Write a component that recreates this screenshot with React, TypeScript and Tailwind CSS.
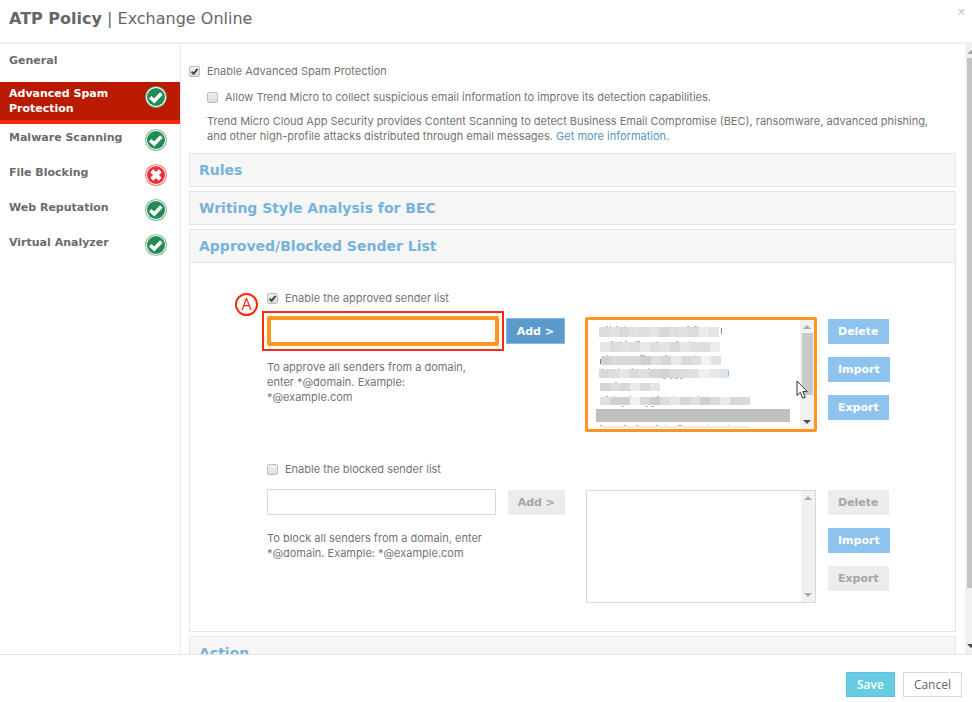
import { ReactNode } from "react";

type status = "ok" | "error";

type navItem = {
  label: string;
  status?: status;
  active?: boolean;
};

const navItems: navItem[] = [
  { label: "Advanced Spam Protection", status: "ok", active: true },
  { label: "Malware Scanning", status: "ok" },
  { label: "File Blocking", status: "error" },
  { label: "Web Reputation", status: "ok" },
  { label: "Virtual Analyzer", status: "ok" },
];

// hidden addresses: y, height, start x and one shade per cell
const maskedRows = [
  { y: 7, h: 10, x: 11, cells: ["#dcdcdc", "#e2e2e2", "#dadada", "#e0e0e0", "#dedede", "#e4e4e4", "#d6d9d7", "#dedede", "#e0e0e0", "#dcdcdc", "#ececec", "#e2e4e5"] },
  { y: 22, h: 10, x: 12, cells: ["#e6e6e6", "#dcdcdc", "#e2e2e2", "#dedede", "#e8e8e8", "#dedede", "#e4e4e4", "#dadada", "#e6e6e6", "#e0e0e0", "#dedede", "#ececec"] },
  { y: 36, h: 9, x: 13, cells: ["#d2d2d2", "#dadada", "#d8d8d8", "#d6d6d6", "#cfcfcf", "#e0e0e0", "#d6d6d6", "#e8e8e8", "#d9d9d9", "#dedede", "#f2f2f2", "#e2e2e2"] },
  { y: 49, h: 9, x: 11, cells: ["#d8d8d8", "#dedede", "#e6e6e6", "#dadada", "#e0e0e0", "#d4d6d5", "#d2d2d2", "#d9d9d9", "#dedede", "#e0e0e0", "#f0f0f0", "#e8e8e8", "#dfe6ea"] },
  { y: 63, h: 8, x: 12, cells: ["#d6d6d6", "#dedede", "#d8d8d8", "#ebebeb", "#d9d9d9", "#e4e4e4"] },
  { y: 77, h: 8, x: 12, cells: ["#e0e0e0", "#d2d2d2", "#d0d0d0", "#f0f0f0", "#d8d8d8", "#cdcdcd", "#dedede", "#e6e6e6", "#d6d6d6", "#e0e0e0", "#cfcfcf", "#dadada", "#eaeaea", "#d6d6d6", "#d9d9d9"] },
];

// letter tips left visible round the mask
const specks = [
  [18, 6, 2], [22, 6, 1], [28, 6, 2], [36, 6, 1], [99, 6, 2], [106, 6, 3],
  [23, 21, 2], [32, 21, 1], [37, 21, 2], [48, 21, 4], [68, 21, 1], [88, 21, 2], [101, 21, 1],
  [19, 35, 1], [52, 35, 5], [77, 35, 2], [106, 35, 1],
  [14, 48, 1], [30, 48, 1], [44, 48, 1], [60, 48, 1], [75, 58, 3], [87, 58, 3], [92, 58, 3], [82, 58, 2],
  [27, 62, 2],
  [18, 76, 2], [26, 76, 1], [42, 76, 1], [69, 76, 2], [85, 76, 1], [110, 76, 1], [57, 86, 3], [63, 86, 3], [34, 86, 2],
  [12, 105, 2], [36, 105, 2], [48, 105, 2], [68, 105, 2], [77, 105, 1], [90, 105, 4], [120, 105, 1], [140, 105, 1],
];

const StatusIcon = ({ status }: { status: status }) => (
  <svg className="w-[22px] h-[22px] shrink-0" viewBox="0 0 22 22">
    <circle cx="11" cy="11" r="10.8" fill={status === "ok" ? "#6fae8c" : "#ee6a6a"} />
    <circle cx="11" cy="11" r="10" fill="#fff" />
    <circle cx="11" cy="11" r="9" fill={status === "ok" ? "#238a52" : "#ea3338"} />
    {status === "ok" ? (
      <path d="M5.2 11.2 9.2 15 16.4 7.4" stroke="#fff" strokeWidth="3.6" fill="none" />
    ) : (
      <path d="m6.8 6.8 8.4 8.4M15.2 6.8l-8.4 8.4" stroke="#fff" strokeWidth="4.2" fill="none" />
    )}
  </svg>
);

const Checkbox = ({
  id,
  checked,
  children,
}: {
  id: string;
  checked?: boolean;
  children: ReactNode;
}) => (
  <div className="flex items-center leading-[15px]">
    <span className="grid mr-[7px]">
      <input
        id={id}
        type="checkbox"
        defaultChecked={checked}
        className="peer col-start-1 row-start-1 appearance-none w-[11px] h-[11px] rounded-[2px] border border-[#bdbdbd] bg-linear-to-b from-[#f0f0f0] to-[#dcdcdc]"
      />
      <svg
        className="col-start-1 row-start-1 w-[11px] h-[11px] pointer-events-none invisible peer-checked:visible"
        viewBox="0 0 11 11"
      >
        <path d="M2.5 5.6 4.6 7.9 8.6 2.8" stroke="#404040" strokeWidth="1.9" fill="none" />
      </svg>
    </span>
    <label htmlFor={id}>{children}</label>
  </div>
);

const Arrow = ({ down, dark }: { down?: boolean; dark?: boolean }) => (
  <svg className="w-[8px] h-[4px] shrink-0" viewBox="0 0 8 4">
    <path d={down ? "M0 0h8L4 4z" : "M0 4h8L4 0z"} fill={dark ? "#505050" : "#a8a8a8"} />
  </svg>
);

const Button = ({
  children,
  variant,
}: {
  children: ReactNode;
  variant: "light" | "strong" | "disabled";
}) => {
  const colors = {
    light: "h-[25px] bg-[#8dc3ed] text-white",
    strong: "h-[26px] bg-[#5b9bcb] border border-[#86b9ea] text-white",
    disabled: "h-[25px] bg-[#ececec] text-[#a6a6a6]",
  };
  return (
    <button
      type="button"
      disabled={variant === "disabled"}
      className={`px-[10px] font-bold font-['DejaVu_Sans',sans-serif] whitespace-nowrap leading-[15px] ${colors[variant]}`}
    >
      {children}
    </button>
  );
};

const MaskedList = () => (
  <svg className="w-[212px] h-[109px]" viewBox="0 0 212 109" shapeRendering="crispEdges">
    {specks.map(([x, y, w], i) => (
      <rect key={i} x={x} y={y} width={w} height="1" fill="#b4b4b4" />
    ))}
    {maskedRows.map((row) =>
      row.cells.map((fill, i) => (
        <rect key={`${row.y}-${i}`} x={row.x + i * 10} y={row.y} width="10" height={row.h} fill={fill} />
      ))
    )}
    <rect x="133" y="8" width="1" height="6" fill="#5f8fc0" />
    <rect x="140" y="51" width="1" height="5" fill="#8fc0e4" />
    <rect x="12" y="39" width="1" height="5" fill="#8a6f6f" />
    <rect x="12" y="106" width="150" height="2" fill="#ececec" />
    <rect x="8" y="89" width="194" height="13" fill="#c0c0c0" />
  </svg>
);

const SenderBlock = ({
  kind,
  children,
}: {
  kind: "approved" | "blocked";
  children: ReactNode;
}) => {
  const on = kind === "approved";
  return (
    <div className="relative w-fit">
      {on && (
        <span className="absolute top-[2px] left-[-32px] w-[23px] h-[23px] rounded-full border-2 border-[#fb2a0c] text-[#fb2a0c] text-[16px] leading-[19px] text-center font-['Open_Sans',sans-serif]">
          A
        </span>
      )}
      <Checkbox id={kind} checked={on}>
        Enable the {kind} sender list
      </Checkbox>
      <div className="flex mt-[10px]">
        <div className="w-[298px] mr-5">
          <div className="flex items-center justify-between h-[30px]">
            <div className="relative w-[232px] shrink-0">
              <input
                type="text"
                aria-label={`Add ${kind} sender`}
                disabled={!on}
                className={
                  on
                    ? "block w-full h-[30px] px-1 bg-white border-4 border-[#ff961e] rounded-[2px] outline-none"
                    : "block w-[229px] h-[26px] px-1 bg-white border border-[#d9d9d9]"
                }
              />
              {on && <span className="absolute -inset-[5px] border-2 border-[#fb2a0c] pointer-events-none" />}
            </div>
            <Button variant={on ? "strong" : "disabled"}>Add &gt;</Button>
          </div>
          <p className="mt-[14px] w-[220px] leading-[15px]">{children}</p>
        </div>
        <div className="flex items-end justify-center w-[232px] h-[116px] mr-[11px]">
          <div
            role="listbox"
            aria-label={`${kind} senders`}
            className={
              on
                ? "relative flex w-full h-[115px] bg-white border-3 border-[#ff961e] rounded-[2px]"
                : "flex w-[230px] h-[113px] bg-white border border-[#d9d9d9]"
            }
          >
            <div className="flex-1 overflow-hidden">{on && <MaskedList />}</div>
            <div className="flex flex-col items-center w-[14px] bg-[#f1f1f1] py-[5px]">
              <Arrow />
              {on && <div className="w-[11px] h-[62px] mt-1 bg-[#c9c9c9]" />}
              <div className="flex-1" />
              <Arrow down dark={on} />
            </div>
            {on && (
              <svg className="absolute left-[208px] top-[60px] w-[12px] h-[20px]" viewBox="0 0 12 20">
                <path
                  d="M1 1v14.5l3.3-3.1 2.4 5.8 2.5-1-2.4-5.6h4.4z"
                  fill="#fff"
                  stroke="#333"
                  strokeWidth="1"
                />
              </svg>
            )}
          </div>
        </div>
        <div className="flex flex-col items-start gap-[13px] pt-[3px]">
          <Button variant={on ? "light" : "disabled"}>Delete</Button>
          <Button variant="light">Import</Button>
          <Button variant={on ? "light" : "disabled"}>Export</Button>
        </div>
      </div>
    </div>
  );
};

const Section = ({ title, children }: { title: string; children?: ReactNode }) => (
  <section className="border border-[#e6e6e6] mb-1">
    <h2 className="h-[32px] pl-[9px] leading-[32px] text-[14px] font-bold font-['DejaVu_Sans',sans-serif] text-[#76b3da] bg-[#f6f6f6]">
      {title}
    </h2>
    {children && <div className="border-t border-[#e6e6e6]">{children}</div>}
  </section>
);

const App = () => {
  return (
    <div className="flex flex-col h-screen overflow-hidden bg-white text-[11px] text-[#747474] font-['Inter',sans-serif]">
      <header className="flex justify-between h-[44px] shrink-0 border-b-2 border-[#f0f0f0] pl-[9px] pr-[6px] font-['DejaVu_Sans',sans-serif]">
        <h1 className="text-[16px] leading-[38px] text-[#666666]">
          <b>ATP Policy</b> | Exchange Online
        </h1>
        <button type="button" aria-label="Close" className="h-6 text-[#cccccc] font-bold">
          ×
        </button>
      </header>

      <div className="flex flex-1 min-h-0">
        <nav className="w-[181px] shrink-0 border-r border-[#ebebeb] font-bold text-[#6b6b6b] leading-[15px] font-['DejaVu_Sans',sans-serif]">
          <a href="#general" className="block h-[38px] pl-[9px] pt-[9px]">
            General
          </a>
          {navItems.map((item) => (
            <a
              key={item.label}
              href="#policy"
              className={
                item.active
                  ? "flex justify-between items-start h-[42px] pl-[9px] pr-[13px] pt-1 bg-[#b91a00] border-b-4 border-[#fb2604] text-white"
                  : "flex justify-between items-start h-[35px] pl-[9px] pr-[13px] pt-[5px]"
              }
            >
              <span className={item.active ? "w-[120px]" : "w-[120px] pt-px"}>{item.label}</span>
              {item.status && <StatusIcon status={item.status} />}
            </a>
          ))}
        </nav>

        <main className="flex-1 min-w-0 overflow-hidden pl-2 pr-[9px] pt-5">
          <Checkbox id="spam" checked>
            Enable Advanced Spam Protection
          </Checkbox>
          <div className="pl-[18px] mt-[11px]">
            <Checkbox id="collect">
              Allow Trend Micro to collect suspicious email information to improve its detection
              capabilities.
            </Checkbox>
            <p className="mt-[9px] mb-[9px] pr-4 leading-[15px]">
              Trend Micro Cloud App Security provides Content Scanning to detect Business Email
              Compromise (BEC), ransomware, advanced phishing, and other high-profile attacks
              distributed through email messages.{" "}
              <a href="#more" className="text-[#5593c4]">
                Get more information.
              </a>
            </p>
          </div>

          <Section title="Rules" />
          <Section title="Writing Style Analysis for BEC" />
          <Section title="Approved/Blocked Sender List">
            <div className="flex flex-col gap-[30px] pl-[77px] pt-7 pb-7">
              <SenderBlock kind="approved">
                To approve all senders from a domain, enter *@domain. Example: *@example.com
              </SenderBlock>
              <SenderBlock kind="blocked">
                To block all senders from a domain, enter *@domain. Example: *@example.com
              </SenderBlock>
            </div>
          </Section>
          <Section title="Action" />
        </main>

        <div className="flex flex-col w-[7px] shrink-0 overflow-hidden bg-[#f1f1f1] pl-[2px] pt-[6px] pb-[6px]">
          <Arrow />
          <div className="h-[530px] mt-1 bg-[#c4c4c4]" />
          <div className="flex-1" />
          <Arrow down dark />
        </div>
      </div>

      <footer className="flex justify-end gap-2 h-[48px] shrink-0 border-t border-[#e4e4e4] pt-[17px] pr-[10px] text-[12px] font-['Open_Sans',sans-serif]">
        <button
          type="submit"
          className="h-[25px] px-[10px] bg-[#68cbe4] border border-[#5cc2dc] text-white font-semibold"
        >
          Save
        </button>
        <button type="button" className="h-[25px] px-[10px] bg-white border border-[#d9d9d9] text-[#666666]">
          Cancel
        </button>
      </footer>
    </div>
  );
};

export default App;
